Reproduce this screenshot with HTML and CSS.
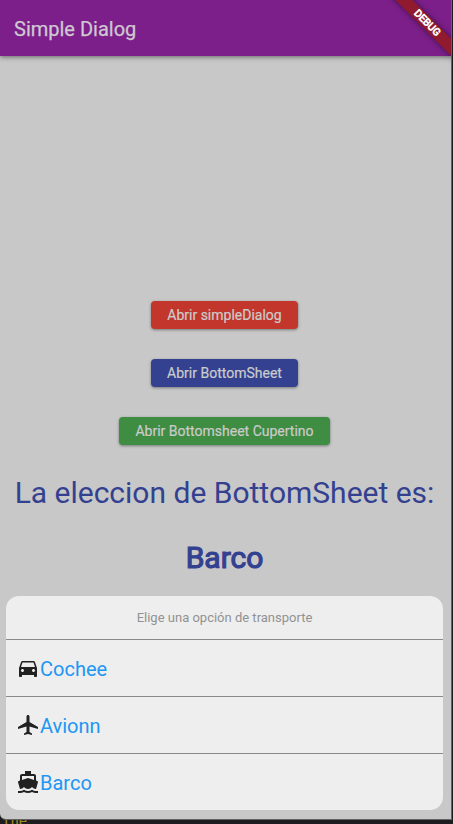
FILE: index.html
```html
<!DOCTYPE html>
<html lang="es">
<head>
<meta charset="utf-8">
<title>Simple Dialog</title>
<link rel="stylesheet" href="styles.css">
</head>
<body>
<div class="phone">
  <header class="app-bar"><h1>Simple Dialog</h1></header>
  <div class="debug"><span>DEBUG</span></div>
  <main class="content">
    <button class="btn red">Abrir simpleDialog</button>
    <button class="btn indigo">Abrir BottomSheet</button>
    <button class="btn green">Abrir Bottomsheet Cupertino</button>
    <p class="label">La eleccion de BottomSheet es:</p>
    <p class="choice">Barco</p>
  </main>
  <section class="sheet">
    <div class="sheet-title">Elige una opción de transporte</div>
    <div class="option">
      <svg viewBox="0 0 24 24"><path d="M18.92 6.01C18.72 5.42 18.16 5 17.5 5h-11c-.66 0-1.21.42-1.42 1.01L3 12v8c0 .55.45 1 1 1h1c.55 0 1-.45 1-1v-1h12v1c0 .55.45 1 1 1h1c.55 0 1-.45 1-1v-8l-2.08-5.99zM6.5 16c-.83 0-1.5-.67-1.5-1.5S5.67 13 6.5 13s1.5.67 1.5 1.5S7.33 16 6.5 16zm11 0c-.83 0-1.5-.67-1.5-1.5s.67-1.5 1.5-1.5 1.5.67 1.5 1.5-.67 1.5-1.5 1.5zM5 11l1.5-4.5h11L19 11H5z"/></svg>
      <span>Cochee</span>
    </div>
    <div class="option">
      <svg viewBox="0 0 24 24"><path d="M22 16v-2l-8.5-5V3.5c0-.83-.67-1.5-1.5-1.5s-1.5.67-1.5 1.5V9L2 14v2l8.5-2.5V19L8 20.5V22l4-1 4 1v-1.5L13.5 19v-5.5L22 16z"/></svg>
      <span>Avionn</span>
    </div>
    <div class="option">
      <svg viewBox="0 0 24 24"><path d="M20 21c-1.39 0-2.78-.47-4-1.32-2.44 1.71-5.56 1.71-8 0C6.78 20.53 5.39 21 4 21H2v2h2c1.38 0 2.74-.35 4-.99 2.52 1.29 5.48 1.29 8 0 1.26.65 2.62.99 4 .99h2v-2h-2zM3.95 19H4c1.6 0 3.02-.88 4-2 .98 1.12 2.4 2 4 2s3.02-.88 4-2c.98 1.12 2.4 2 4 2h.05l1.89-6.68c.08-.26.06-.54-.06-.78s-.34-.42-.6-.5L20 10.62V6c0-1.1-.9-2-2-2h-3V1H9v3H6c-1.1 0-2 .9-2 2v4.62l-1.29.42c-.26.08-.48.26-.6.5s-.15.52-.06.78L3.95 19zM6 6h12v3.97L12 8 6 9.97V6z"/></svg>
      <span>Barco</span>
    </div>
  </section>
</div>
<footer class="backdrop"><span>The</span></footer>
</body>
</html>
```
FILE: styles.css
```css
* { box-sizing: border-box; }
body {
  margin: 0;
  height: 824px;
  overflow: hidden;
  background: #1d1d1f;
  font-family: Roboto, sans-serif;
}
h1, p { margin: 0; font-weight: 400; }
.phone {
  position: relative;
  width: 452px;
  height: 820px;
  display: flex;
  flex-direction: column;
  overflow: hidden;
  background: #c8c8c8;
  border-right: 1px solid #626262;
  border-bottom: 1px solid #626262;
  border-bottom-left-radius: 6px;
}
.app-bar {
  flex: none;
  height: 56px;
  display: flex;
  align-items: center;
  padding: 2px 14px 0;
  background: #7c1f8a;
  box-shadow: 0 1px 5px rgba(0, 0, 0, .5);
}
.app-bar h1 {
  font-size: 20px;
  line-height: 24px;
  color: #cfc8d1;
  -webkit-text-stroke: .25px currentColor;
}
.debug {
  position: absolute;
  top: 17px;
  left: 377px;
  width: 100px;
  height: 12px;
  display: flex;
  align-items: center;
  justify-content: center;
  transform: rotate(45deg);
  background: #901a2e;
  box-shadow: 0 0 6px rgba(0, 0, 0, .5);
  color: #fff;
  font-size: 10.2px;
  font-weight: 400;
  line-height: 12px;
  -webkit-text-stroke: .7px currentColor;
}
.content {
  flex: 1;
  display: flex;
  flex-direction: column;
  align-items: center;
  padding: 245px 2px 0 0;
}
.btn {
  height: 28px;
  margin: 0 0 30px;
  padding: 0 16px;
  border: 0;
  border-radius: 4px;
  font: 400 14px/28px Roboto, sans-serif;
  color: #cbcbcb;
  -webkit-text-stroke: .2px currentColor;
  box-shadow: 0 1px 3px rgba(0, 0, 0, .4);
}
.btn.red { background: #c3362c; }
.btn.indigo { background: #334190; }
.btn.green { background: #3e8d42; }
.label, .choice {
  font-size: 30px;
  line-height: 35px;
  color: #334190;
  white-space: nowrap;
}
.choice { margin-top: 30px; -webkit-text-stroke: 1.2px currentColor; }
.sheet {
  flex: none;
  width: 437px;
  margin: 0 0 9px 6px;
  overflow: hidden;
  border-radius: 13px;
  background: #eee;
}
.sheet-title {
  height: 43px;
  font-size: 13px;
  line-height: 43px;
  text-align: center;
  color: #929292;
}
.option {
  height: 57px;
  display: flex;
  align-items: center;
  padding-left: 10px;
  border-top: 1px solid #898989;
  color: #2196f3;
  font-size: 20px;
}
.option span { padding-top: 2px; }
.option svg { width: 24px; height: 24px; fill: #212121; }
.backdrop {
  height: 4px;
  overflow: hidden;
  padding-left: 2px;
  color: #a18a24;
  font: 14px/14px "DejaVu Sans Mono", monospace;
}
.backdrop span { display: block; margin-top: -6px; }
```
